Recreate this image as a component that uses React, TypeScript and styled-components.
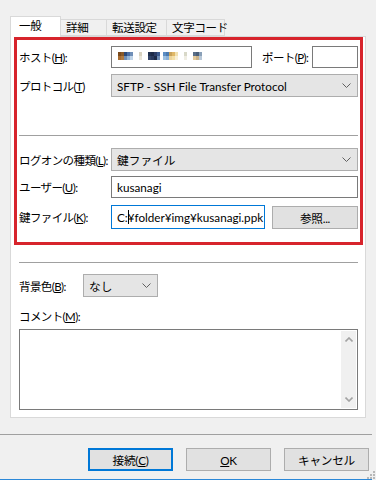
import React from "react";
import styled, { createGlobalStyle } from "styled-components";

const Global = createGlobalStyle`
  html, body { margin: 0; padding: 0; background: #f0f0f0; }
  body {
    font-family: "Lato", "Noto Sans CJK JP", sans-serif;
    font-size: 11.7px;
    color: #000;
  }
`;

const Window = styled.div`
  width: 376px;
  height: 480px;
  box-sizing: border-box;
  padding-top: 16px;
  display: flex;
  flex-direction: column;
  position: relative;
  overflow: hidden;
`;

const TabBar = styled.div`
  display: flex;
  align-items: flex-end;
  height: 20px;
  margin-left: 10px;
`;

const Tab = styled.div<{ $active?: boolean; $w: number }>`
  width: ${(p) => p.$w}px;
  height: ${(p) => (p.$active ? 21 : 17)}px;
  box-sizing: border-box;
  border: 1px solid #d9d9d9;
  border-bottom: ${(p) => (p.$active ? "none" : "1px solid #d9d9d9")};
  border-left: ${(p) => (p.$active ? "1px solid #d9d9d9" : "none")};
  background: ${(p) => (p.$active ? "#fff" : "#f0f0f0")};
  display: flex;
  align-items: center;
  padding-left: ${(p) => (p.$active ? 8 : 5)}px;
  padding-bottom: ${(p) => (p.$active ? 3 : 0)}px;
  white-space: nowrap;
  line-height: 1;
  font-size: 11.5px;
  letter-spacing: -0.3px;
  position: relative;
  z-index: ${(p) => (p.$active ? 2 : 1)};
  margin-bottom: ${(p) => (p.$active ? -1 : 0)}px;
`;

const Panel = styled.div`
  margin-left: 10px;
  width: 356px;
  height: 382px;
  box-sizing: border-box;
  background: #fff;
  border: 1px solid #d9d9d9;
  display: flex;
  flex-direction: column;
`;

const RedBox = styled.div`
  margin-left: 3px;
  width: 349px;
  height: 208px;
  box-sizing: border-box;
  border: 3px solid #d7242c;
  padding: 6px 2px 0 2px;
  display: flex;
  flex-direction: column;
`;

const Row = styled.div<{ $top?: number }>`
  display: flex;
  align-items: center;
  margin-top: ${(p) => p.$top ?? 0}px;
`;

const Label = styled.div<{ $w?: number }>`
  width: ${(p) => p.$w ?? 92}px;
  flex-shrink: 0;
  white-space: nowrap;
  font-size: 11.5px;
  letter-spacing: -0.6px;
`;

const U = styled.span`
  text-decoration: underline;
  text-underline-offset: 1px;
`;

const Input = styled.div<{ $w?: number; $focus?: boolean; $h?: number }>`
  ${(p) => (p.$w ? `width: ${p.$w}px;` : "flex: 1;")}
  height: ${(p) => p.$h ?? 22}px;
  box-sizing: border-box;
  border: 1px solid ${(p) => (p.$focus ? "#0078d7" : "#7a7a7a")};
  background: #fff;
  display: flex;
  align-items: center;
  padding-left: 5px;
  overflow: hidden;
  white-space: nowrap;
`;

const Select = styled.div<{ $w?: number }>`
  ${(p) => (p.$w ? `width: ${p.$w}px;` : "flex: 1;")}
  height: 23px;
  box-sizing: border-box;
  border: 1px solid #adadad;
  background: #e5e5e5;
  display: flex;
  align-items: center;
  justify-content: space-between;
  padding: 0 6px 0 5px;
  white-space: nowrap;
`;

const Btn = styled.div<{ $default?: boolean; $w?: number }>`
  width: ${(p) => p.$w ?? 85}px;
  height: 23px;
  box-sizing: border-box;
  border: ${(p) => (p.$default ? "2px solid #0078d7" : "1px solid #adadad")};
  background: #e1e1e1;
  display: flex;
  align-items: center;
  justify-content: center;
  flex-shrink: 0;
  white-space: nowrap;
  letter-spacing: -0.3px;
`;

const Sep = styled.div<{ $top: number; $right?: number }>`
  height: 1px;
  background: #a0a0a0;
  margin-top: ${(p) => p.$top}px;
  margin-right: ${(p) => p.$right ?? 0}px;
`;

const Spacer = styled.div<{ $w: number }>`
  width: ${(p) => p.$w}px;
  flex-shrink: 0;
`;

const Inner = styled.div`
  padding: 0 7px 0 8px;
  display: flex;
  flex-direction: column;
`;

const CommentLabel = styled.div`
  margin-top: 9px;
  height: 20px;
  display: flex;
  align-items: center;
  font-size: 11.5px;
  letter-spacing: -0.6px;
`;

const TextArea = styled.div`
  margin-top: 3px;
  height: 81px;
  box-sizing: border-box;
  border: 1px solid #7a7a7a;
  display: flex;
  justify-content: flex-end;
`;

const ScrollTrack = styled.div`
  width: 15px;
  margin: 1px 1px 1px 0;
  background: #f0f0f0;
  display: flex;
  flex-direction: column;
  justify-content: space-between;
  align-items: center;
  padding: 6px 0;
  box-sizing: border-box;
`;

const Footer = styled.div`
  display: flex;
  flex-direction: column;
`;

const ButtonRow = styled.div`
  display: flex;
  justify-content: flex-end;
  gap: 13px;
  margin-top: 13px;
  padding-right: 7px;
`;

const BottomEdge = styled.div`
  position: absolute;
  left: 0;
  right: 4px;
  bottom: 0;
  height: 1px;
  background: #2b88d8;
`;

const Grip = styled.svg`
  position: absolute;
  right: 1px;
  bottom: 1px;
`;

const Mosaic = styled.div`
  display: grid;
  grid-template-columns: repeat(28, 3px);
  grid-auto-rows: 4px;
  margin-top: -2px;
  margin-left: 1px;
`;

const Cell = styled.div<{ $c: string }>`
  background: ${(p) => p.$c};
`;

const Caret = styled.span`
  display: inline-block;
  width: 1px;
  height: 14px;
  background: #000;
  vertical-align: middle;
  margin: 0 -1px 0 0;
`;

const Chevron = ({ up }: { up?: boolean }) => (
  <svg width="9" height="5" viewBox="0 0 9 5">
    <polyline
      points={up ? "0.5,4.5 4.5,0.5 8.5,4.5" : "0.5,0.5 4.5,4.5 8.5,0.5"}
      fill="none"
      stroke="#606060"
      strokeWidth="1"
    />
  </svg>
);

const ScrollArrow = ({ up }: { up?: boolean }) => (
  <svg width="8" height="5" viewBox="0 0 8 5">
    <polyline
      points={up ? "0.5,4.5 4,1 7.5,4.5" : "0.5,0.5 4,4 7.5,0.5"}
      fill="none"
      stroke="#a3a3a3"
      strokeWidth="1.6"
    />
  </svg>
);

// pixelated hostname (two rows of 3px cells)
const W = "#fff";
const top = [
  "#7a4a1c", "#8a5a28", "#2b4a7a", "#4a6fa5", "#6f8fb8", W, W, "#d8d2c0", W, W,
  "#20304f", "#1c2a48", "#2c3d66", "#3a5a8f", W, "#5d8ec4", "#4a7ab0", "#c8a25a",
  "#e0b868", "#f0e0b0", W, W, "#d8d8c8", W, W, "#5a6e88", "#4a5e78", "#8aa0b8",
];
const bot = [
  "#a86c30", "#b07a40", "#6f8fb8", "#95b5d5", "#c0d4e8", W, W, "#eae6da", W, W,
  "#324468", "#2a3a5e", "#1c2a48", "#6d8cb5", W, "#9dc0e0", "#8ab0d8", "#ecd49c",
  "#f4e0a8", "#f8f0d8", W, W, "#f0eee4", W, W, "#e2c89a", "#c8b088", "#b8c8d8",
];

const App: React.FC = () => (
  <Window>
    <Global />
    <TabBar>
      <Tab $active $w={51}>一般</Tab>
      <Tab $w={46}>詳細</Tab>
      <Tab $w={60}>転送設定</Tab>
      <Tab $w={58}>文字コード</Tab>
    </TabBar>
    <Panel>
      <RedBox>
        <Row>
          <Label>ホスト(<U>H</U>):</Label>
          <Input $w={141}>
            <Mosaic>
              {top.map((c, i) => (
                <Cell key={"t" + i} $c={c} />
              ))}
              {bot.map((c, i) => (
                <Cell key={"b" + i} $c={c} />
              ))}
            </Mosaic>
          </Input>
          <Spacer $w={10} />
          <Label $w={50}>ポート(<U>P</U>):</Label>
          <Input />
        </Row>
        <Row $top={6}>
          <Label>プロトコル(<U>T</U>)</Label>
          <Select>
            <span>SFTP - SSH File Transfer Protocol</span>
            <Chevron />
          </Select>
        </Row>
        <Sep $top={38} />
        <Row $top={12}>
          <Label>ログオンの種類(<U>L</U>):</Label>
          <Select>
            <span>鍵ファイル</span>
            <Chevron />
          </Select>
        </Row>
        <Row $top={5}>
          <Label>ユーザー(<U>U</U>):</Label>
          <Input>kusanagi</Input>
        </Row>
        <Row $top={7}>
          <Label>鍵ファイル(<U>K</U>):</Label>
          <Input $w={154} $h={24} $focus>
            C:<Caret />¥folder¥img¥kusanagi.ppk
          </Input>
          <Spacer $w={7} />
          <Btn $w={86}>参照...</Btn>
        </Row>
      </RedBox>
      <Inner>
        <Sep $top={17} />
        <Row $top={11}>
          <Label $w={64}>背景色(<U>B</U>):</Label>
          <Select $w={75}>
            <span>なし</span>
            <Chevron />
          </Select>
        </Row>
        <CommentLabel>コメント(<U>M</U>):</CommentLabel>
        <TextArea>
          <ScrollTrack>
            <ScrollArrow up />
            <ScrollArrow />
          </ScrollTrack>
        </TextArea>
      </Inner>
    </Panel>
    <Footer>
      <Sep $top={16} $right={4} />
      <ButtonRow>
        <Btn $default>
          接続(<U>C</U>)
        </Btn>
        <Btn>
          <U>O</U>K
        </Btn>
        <Btn>キャンセル</Btn>
      </ButtonRow>
    </Footer>
    <BottomEdge />
    <Grip width="8" height="8" viewBox="0 0 8 8">
      {[
        [6, 0], [6, 3], [3, 3], [6, 6], [3, 6], [0, 6],
      ].map(([x, y], i) => (
        <rect key={i} x={x} y={y} width="2" height="2" fill="#b8b8b8" />
      ))}
    </Grip>
  </Window>
);

export default App;
